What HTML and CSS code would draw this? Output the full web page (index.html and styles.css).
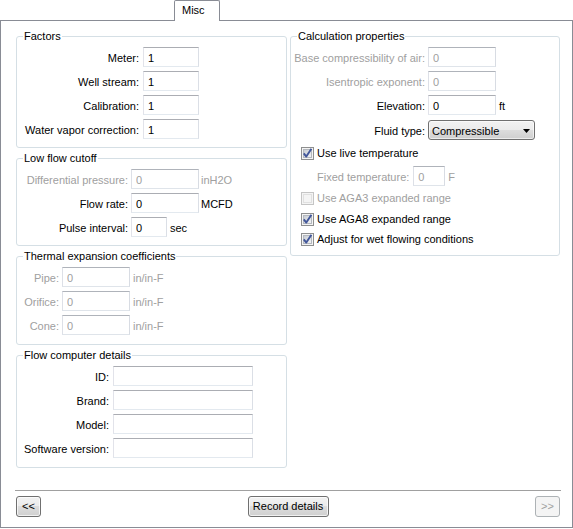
FILE: index.html
```html
<!DOCTYPE html>
<html>
<head>
<meta charset="utf-8">
<link rel="stylesheet" href="styles.css">
</head>
<body>
<svg class="defs" width="0" height="0" aria-hidden="true">
  <defs>
    <linearGradient id="cbfill" x1="0" y1="0" x2="1" y2="1">
      <stop offset="0" stop-color="#c4c9d0"/>
      <stop offset="1" stop-color="#f6f6f7"/>
    </linearGradient>
    <symbol id="cb-on" viewBox="0 0 13 13">
      <rect x="0.5" y="0.5" width="12" height="12" fill="#f4f4f4" stroke="#8e8f8f"/>
      <rect x="2.5" y="2.5" width="8" height="8" fill="url(#cbfill)" stroke="#b4b8be"/>
      <path d="M2.8 6.4 L5.3 9.6 L10.4 1.8" fill="none" stroke="#42579a" stroke-width="1.9" stroke-linejoin="round"/>
    </symbol>
    <symbol id="cb-off-dis" viewBox="0 0 13 13">
      <rect x="0.5" y="0.5" width="12" height="12" fill="#f4f4f4" stroke="#c5c5c5"/>
      <rect x="2.5" y="2.5" width="8" height="8" fill="#f4f4f4" stroke="#e0e0e0"/>
    </symbol>
  </defs>
</svg>

<div class="tabs"><div class="tab">Misc</div></div>

<div class="panel">
  <div class="main">
    <div class="col col-left">

      <div class="group g-factors">
        <div class="gtitle">Factors</div>
        <div class="rows">
          <div class="row"><span class="lbl">Meter:</span><input class="tb" type="text" value="1" readonly></div>
          <div class="row"><span class="lbl">Well stream:</span><input class="tb" type="text" value="1" readonly></div>
          <div class="row"><span class="lbl">Calibration:</span><input class="tb" type="text" value="1" readonly></div>
          <div class="row"><span class="lbl">Water vapor correction:</span><input class="tb" type="text" value="1" readonly></div>
        </div>
      </div>

      <div class="group g-lowflow">
        <div class="gtitle">Low flow cutoff</div>
        <div class="rows">
          <div class="row"><span class="lbl dis">Differential pressure:</span><input class="tb" type="text" value="0" disabled><span class="unit u2 dis">inH2O</span></div>
          <div class="row"><span class="lbl">Flow rate:</span><input class="tb" type="text" value="0" readonly><span class="unit u2">MCFD</span></div>
          <div class="row"><span class="lbl">Pulse interval:</span><input class="tb w36" type="text" value="0" readonly><span class="unit">sec</span></div>
        </div>
      </div>

      <div class="group g-thermal">
        <div class="gtitle">Thermal expansion coefficients</div>
        <div class="rows">
          <div class="row"><span class="lbl dis">Pipe:</span><input class="tb" type="text" value="0" disabled><span class="unit dis">in/in-F</span></div>
          <div class="row"><span class="lbl dis">Orifice:</span><input class="tb" type="text" value="0" disabled><span class="unit dis">in/in-F</span></div>
          <div class="row"><span class="lbl dis">Cone:</span><input class="tb" type="text" value="0" disabled><span class="unit dis">in/in-F</span></div>
        </div>
      </div>

      <div class="group g-flowcomp">
        <div class="gtitle">Flow computer details</div>
        <div class="rows">
          <div class="row"><span class="lbl">ID:</span><input class="tb" type="text" value="" readonly></div>
          <div class="row"><span class="lbl">Brand:</span><input class="tb" type="text" value="" readonly></div>
          <div class="row"><span class="lbl">Model:</span><input class="tb" type="text" value="" readonly></div>
          <div class="row"><span class="lbl">Software version:</span><input class="tb" type="text" value="" readonly></div>
        </div>
      </div>

    </div>

    <div class="col col-right">
      <div class="group g-calc">
        <div class="gtitle">Calculation properties</div>
        <div class="rows">
          <div class="row"><span class="lbl dis">Base compressibility of air:</span><input class="tb" type="text" value="0" disabled></div>
          <div class="row"><span class="lbl dis">Isentropic exponent:</span><input class="tb" type="text" value="0" disabled></div>
          <div class="row"><span class="lbl">Elevation:</span><input class="tb" type="text" value="0" readonly><span class="unit">ft</span></div>
          <div class="row fluid"><span class="lbl">Fluid type:</span>
            <div class="dd"><span class="dd-text">Compressible</span>
              <svg class="dd-arrow" width="7" height="4" viewBox="0 0 7 4"><path d="M0 0 H7 L3.5 4 Z" fill="#000"/></svg>
            </div>
          </div>
          <div class="cbrow first"><svg class="cb" width="13" height="13"><use href="#cb-on"/></svg><span>Use live temperature</span></div>
          <div class="row fixed"><span class="lbl-free dis">Fixed temperature:</span><input class="tb w32" type="text" value="0" disabled><span class="unit dis">F</span></div>
          <div class="cbrow"><svg class="cb" width="13" height="13"><use href="#cb-off-dis"/></svg><span class="dis">Use AGA3 expanded range</span></div>
          <div class="cbrow"><svg class="cb" width="13" height="13"><use href="#cb-on"/></svg><span>Use AGA8 expanded range</span></div>
          <div class="cbrow last"><svg class="cb" width="13" height="13"><use href="#cb-on"/></svg><span>Adjust for wet flowing conditions</span></div>
        </div>
      </div>
    </div>
  </div>

  <div class="footer">
    <button class="btn small" type="button">&lt;&lt;</button>
    <button class="btn rec" type="button">Record details</button>
    <button class="btn small" type="button" disabled>&gt;&gt;</button>
  </div>
</div>
</body>
</html>
```

FILE: styles.css
```css
html, body {
  margin: 0;
  padding: 0;
  background: #fff;
}
body {
  width: 573px;
  font-family: "Liberation Sans", Arial, sans-serif;
  font-size: 11px;
  color: #000;
}
.defs {
  position: absolute;
  width: 0;
  height: 0;
  overflow: hidden;
}

/* tab strip */
.tabs {
  display: flex;
  height: 20px;
}
.tab {
  position: relative;
  z-index: 1;
  box-sizing: border-box;
  width: 46px;
  height: 21px;
  margin-left: 174px;
  padding: 3px 0 0 7px;
  line-height: 13px;
  border: 1px solid #898c95;
  border-bottom: none;
  border-radius: 2px 2px 0 0;
  background: #fff;
}

/* panel */
.panel {
  box-sizing: border-box;
  height: 508px;
  border: 1px solid #898c95;
  padding: 15px 12px 10px 15px;
  display: flex;
  flex-direction: column;
}
.main {
  display: flex;
  gap: 3px;
  align-items: flex-start;
}
.col-left {
  width: 271px;
  display: flex;
  flex-direction: column;
  gap: 10px;
}
.col-right {
  width: 270px;
}

/* group boxes */
.group {
  border: 1px solid #d5dfe5;
  border-radius: 3px;
  padding: 0 0 8px;
  display: flex;
  flex-direction: column;
}
.gtitle {
  align-self: flex-start;
  margin: -7px 0 0 6px;
  padding: 0 1px;
  height: 13px;
  line-height: 13px;
  background: #fff;
  white-space: nowrap;
}
.rows {
  margin-top: 4px;
  display: flex;
  flex-direction: column;
  gap: 4px;
}
.row {
  display: flex;
  align-items: flex-start;
  height: 20px;
}
.lbl {
  flex: none;
  width: var(--lw);
  margin-right: var(--lg);
  text-align: right;
  line-height: 22px;
  white-space: nowrap;
}
.lbl-free {
  flex: none;
  margin-right: 4px;
  line-height: 22px;
  white-space: nowrap;
}
.unit {
  margin-left: 3px;
  line-height: 22px;
  white-space: nowrap;
}
.unit.u2 {
  margin-left: 2px;
}
.dis {
  color: #a0a0a0;
}

.g-factors { --lw: 122px; --lg: 4px; --tw: 56px; }
.g-lowflow { --lw: 111px; --lg: 3px; --tw: 68px; }
.g-thermal { --lw: 42px; --lg: 3px; --tw: 68px; padding-bottom: 9px; }
.g-flowcomp { --lw: 92px; --lg: 4px; --tw: 140px; padding-bottom: 9px; }
.g-calc { --lw: 134px; --lg: 3px; --tw: 68px; padding-bottom: 7px; }

/* text boxes */
.tb {
  flex: none;
  box-sizing: border-box;
  width: var(--tw);
  height: 20px;
  margin: 0;
  padding: 2px 4px 0;
  font: inherit;
  color: #000;
  background: #fff;
  border: 1px solid;
  border-color: #abadb3 #dbdfe6 #e3e9ef #e2e3ea;
  border-radius: 0;
  outline: none;
}
.tb:disabled {
  color: #a0a0a0;
  background: #fff;
  border-color: #afb3ba #d8dce3 #dfe4ea #dde0e7;
}
.tb.w36 { width: 36px; }
.tb.w32 { width: 32px; }

/* dropdown */
.row.fluid {
  margin-top: 1px;
}
.dd {
  flex: none;
  box-sizing: border-box;
  width: 107px;
  height: 20px;
  display: flex;
  align-items: flex-start;
  justify-content: space-between;
  padding: 0 4px 0 3px;
  border: 1px solid #707070;
  border-radius: 3px;
  background: linear-gradient(#f2f2f2 0%, #ebebeb 50%, #dddddd 50%, #cfcfcf 100%);
  box-shadow: inset 0 0 0 1px rgba(255, 255, 255, 0.6);
}
.dd-text {
  line-height: 20px;
}
.dd-arrow {
  margin-top: 8px;
}

/* checkboxes */
.cbrow {
  display: flex;
  align-items: center;
  height: 17px;
  padding-left: 10px;
  line-height: 17px;
  white-space: nowrap;
}
.cbrow.first {
  margin-top: 1px;
}
.cbrow.last {
  margin-top: -1px;
}
.cb {
  flex: none;
  margin-right: 3px;
}
.row.fixed {
  padding-left: 26px;
}

/* footer */
.footer {
  margin: auto -1px 0;
  padding: 5px 1px 0;
  border-top: 1px solid #a0a0a0;
  display: flex;
  justify-content: space-between;
}
.btn {
  box-sizing: border-box;
  height: 21px;
  margin: 0;
  padding: 0;
  font: inherit;
  line-height: 19px;
  color: #000;
  text-align: center;
  border: 1px solid #707070;
  border-radius: 3px;
  background: linear-gradient(#f2f2f2 0%, #ebebeb 50%, #dddddd 50%, #cfcfcf 100%);
  box-shadow: inset 0 0 0 1px rgba(255, 255, 255, 0.7);
}
.btn.small { width: 25px; }
.btn.rec { width: 81px; }
.btn:disabled {
  color: #a0a0a0;
  border-color: #adb2b5;
  background: #f4f4f4;
  box-shadow: none;
}
```
